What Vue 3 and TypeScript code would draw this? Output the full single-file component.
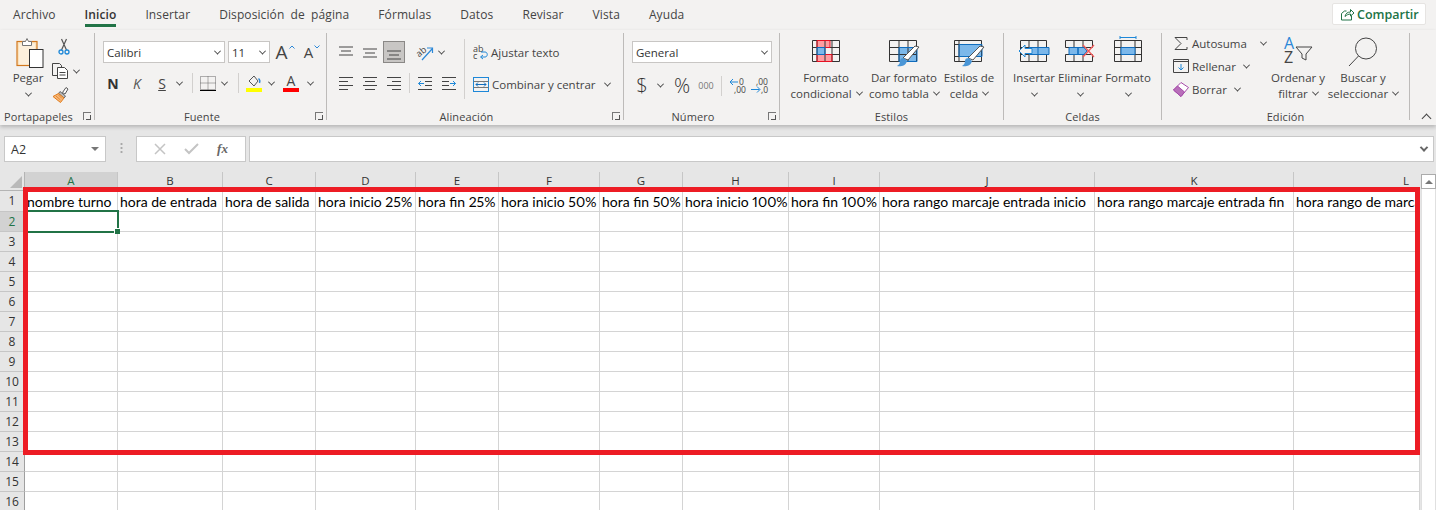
<script setup lang="ts">
const tabs = ['Archivo', 'Inicio', 'Insertar', 'Disposición de página', 'Fórmulas', 'Datos', 'Revisar', 'Vista', 'Ayuda'];

// anchos medidos en la captura
const columns = [
  { name: 'A', width: 93, title: 'nombre turno' },
  { name: 'B', width: 105, title: 'hora de entrada' },
  { name: 'C', width: 93, title: 'hora de salida' },
  { name: 'D', width: 100, title: 'hora inicio 25%' },
  { name: 'E', width: 83, title: 'hora fin 25%' },
  { name: 'F', width: 101, title: 'hora inicio 50%' },
  { name: 'G', width: 83, title: 'hora fin 50%' },
  { name: 'H', width: 106, title: 'hora inicio 100%' },
  { name: 'I', width: 91, title: 'hora fin 100%' },
  { name: 'J', width: 215, title: 'hora rango marcaje entrada inicio' },
  { name: 'K', width: 199, title: 'hora rango marcaje entrada fin' },
  { name: 'L', width: 126, title: 'hora rango de marcaje salida inicio' },
];
const rows = Array.from({ length: 16 }, (_, i) => i + 1);
const gridTemplate = '25px ' + columns.map((c) => c.width + 'px').join(' ');
</script>

<template>
  <div class="app">
    <div class="tabs">
      <div v-for="tab in tabs" :key="tab" class="tab" :class="{ active: tab === 'Inicio' }">{{ tab }}</div>
      <button class="share">
        <svg width="15" height="14" viewBox="0 0 15 14" fill="none" stroke="#217346">
          <path d="M1.5 6.500v6.500h10V8.500M1.500 6.500l3-2.500h2M5 9.500c.5-3 2.500-4.500 5.500-4.500V2.500l3.500 3.500-3.500 3V7c-2 0-4 1-5.500 2.500z" />
        </svg>
        Compartir
      </button>
    </div>

    <div class="ribbon">
      <!-- Portapapeles -->
      <section class="group g-clip">
        <div class="body clip-body">
          <div class="big">
            <div class="big-icon paste-icon">
              <svg width="28" height="31" viewBox="0 0 28 31">
                <rect x="1" y="4.500" width="20" height="24" fill="#fbe3bd" stroke="#d2781e" stroke-width="1.200" />
                <path d="M3 6.500h16v21H3z" fill="#fdf0dc" />
                <path d="M6.500 8.500V4.500h3l1.500-3 1.500 3h3v4z" fill="#fff" stroke="#777" />
                <rect x="13.500" y="12.500" width="13.500" height="18" fill="#fff" stroke="#333" />
              </svg>
            </div>
            <span>Pegar</span>
            <i class="chev"></i>
          </div>
          <div class="clip-tools">
            <svg width="12" height="17" viewBox="0 0 12 17" fill="none">
              <path d="M3.500 1l5 11M8.500 1l-5 11" stroke="#555" stroke-width="1.200" />
              <circle cx="3" cy="14" r="2" stroke="#1e88d8" stroke-width="1.300" />
              <circle cx="9" cy="14" r="2" stroke="#1e88d8" stroke-width="1.300" />
            </svg>
            <div class="clip-copy">
              <svg width="17" height="16" viewBox="0 0 17 16" fill="#f3f2f1" stroke="#444">
                <path d="M.5.500h7l2 2v10h-9z" />
                <path d="M5.500 4.500h7l3 3v8h-10z" fill="#fff" />
                <path d="M7.500 9.500h6M7.500 12h6" />
              </svg>
              <i class="chev"></i>
            </div>
            <svg width="17" height="16" viewBox="0 0 17 16" fill="none">
              <path d="M10.500 5.500l3.500-5 2 1.500-3 5z" fill="#fff" stroke="#555" />
              <path d="M8 4.500l5.500 4.500-1.500 2L6.500 6.500z" fill="#bbb" stroke="#666" />
              <path d="M6.500 6.500L12 11l-3.500 4.500L1 9.500z" fill="#f7b87a" stroke="#e07b1a" />
              <path d="M4 9l4.500 4M6 7.500l4 4" stroke="#e07b1a" stroke-width=".8" />
            </svg>
          </div>
        </div>
        <div class="foot"><span>Portapapeles</span><i class="launch"></i></div>
      </section>
      <div class="sep"></div>

      <!-- Fuente -->
      <section class="group g-font">
        <div class="body font-body">
          <div class="font-row1">
            <div class="select font-name">Calibri<i class="chev"></i></div>
            <div class="select font-size">11<i class="chev"></i></div>
            <span class="grow">A<svg width="6" height="4" viewBox="0 0 6 4" fill="none" stroke="#2b88d8"><path d="M.5 3.500L3 1l2.500 2.500" /></svg></span>
            <span class="shrink">A<svg width="6" height="4" viewBox="0 0 6 4" fill="none" stroke="#2b88d8"><path d="M.5.500L3 3 5.500.500" /></svg></span>
          </div>
          <div class="font-row2">
            <b class="t-n">N</b>
            <em class="t-k">K</em>
            <u class="t-s">S</u>
            <i class="chev"></i>
            <i class="vsep"></i>
            <svg width="16" height="15" viewBox="0 0 16 15" fill="none" stroke="#666" stroke-dasharray="1 1">
              <path d="M.5.500h15v13H.5zM8 .500v13M.5 7h15" />
              <path d="M0 14.500h16" stroke="#000" stroke-dasharray="none" />
            </svg>
            <i class="chev"></i>
            <i class="vsep"></i>
            <svg width="16" height="17" viewBox="0 0 16 17" fill="none">
              <path d="M3 6l5-5 4 5-4 5z" stroke="#555" />
              <path d="M12.500 3.500c1.500 1 1.500 3 1 4.500" stroke="#2b88d8" stroke-width="1.400" />
              <rect y="13" width="16" height="4" fill="#ffff00" />
            </svg>
            <i class="chev"></i>
            <span class="font-color">A</span>
            <i class="chev"></i>
          </div>
        </div>
        <div class="foot"><span>Fuente</span><i class="launch"></i></div>
      </section>
      <div class="sep"></div>

      <!-- Alineacion -->
      <section class="group g-align">
        <div class="body align-body">
          <div class="align-left">
            <div class="align-row1">
              <svg class="ico14" viewBox="0 0 14 12" stroke="#444"><path d="M0 .500h14M2 4.500h10M0 8.500h14" /></svg>
              <svg class="ico14" viewBox="0 0 14 12" stroke="#444"><path d="M0 2.500h14M2 6.500h10M0 10.500h14" /></svg>
              <div class="align-on">
                <svg class="ico14" viewBox="0 0 14 12" stroke="#444"><path d="M0 3.500h14M2 7.500h10M0 11.500h14" /></svg>
              </div>
              <span></span>
              <svg class="with-text" width="18" height="17" viewBox="0 0 18 17" fill="none">
                <text x="0" y="11" transform="rotate(-40 5 8)" class="svg-small">ab</text>
                <path d="M6 16L16 5M11 4h5.500v5" stroke="#2b88d8" stroke-width="1.200" />
              </svg>
              <i class="chev"></i>
            </div>
            <div class="align-row2">
              <svg class="ico14" viewBox="0 0 14 13" stroke="#444"><path d="M0 .500h14M0 4.500h9M0 8.500h14M0 12.500h9" /></svg>
              <svg class="ico14" viewBox="0 0 14 13" stroke="#444"><path d="M0 .500h14M2 4.500h10M0 8.500h14M2 12.500h10" /></svg>
              <svg class="ico14" viewBox="0 0 14 13" stroke="#444"><path d="M0 .500h14M5 4.500h9M0 8.500h14M5 12.500h9" /></svg>
              <i class="vsep"></i>
              <svg class="ico14" viewBox="0 0 14 13" fill="none" stroke="#444"><path d="M0 .500h14M7 4.500h7M7 8.500h7M0 12.500h14" /><path d="M6 6.500H.5M3 4L.5 6.500 3 9" stroke="#1e88d8" /></svg>
              <svg class="ico14" viewBox="0 0 14 13" fill="none" stroke="#444"><path d="M0 .500h14M0 4.500h7M0 8.500h7M0 12.500h14" /><path d="M8 6.500h5.500M11 4l2.500 2.500L11 9" stroke="#1e88d8" /></svg>
            </div>
          </div>
          <i class="vsep tall"></i>
          <div class="align-right">
            <div class="line">
              <svg class="with-text" width="15" height="16" viewBox="0 0 15 16" fill="none">
                <text x="0" y="7.500" class="svg-small">ab</text>
                <text x="0" y="15" class="svg-small">c</text>
                <path d="M8 13h4c3 0 3-5 0-5H8M10 11l-2.500 2 2.500 2" stroke="#1e88d8" />
              </svg>
              <span>Ajustar texto</span>
            </div>
            <div class="line">
              <svg width="16" height="15" viewBox="0 0 16 15" fill="none" stroke="#1e88d8">
                <rect x=".5" y=".500" width="15" height="14" />
                <path d="M.5 4.500h15M.5 10.500h15" stroke="#777" />
                <path d="M3 7.500h10M5 5.500l-2 2 2 2M11 5.500l2 2-2 2" stroke="#0f6cbd" />
              </svg>
              <span>Combinar y centrar</span>
              <i class="chev merge-chev"></i>
            </div>
          </div>
        </div>
        <div class="foot"><span>Alineación</span><i class="launch"></i></div>
      </section>
      <div class="sep"></div>

      <!-- Numero -->
      <section class="group g-num">
        <div class="body num-body">
          <div class="select num-format">General<i class="chev"></i></div>
          <div class="num-row">
            <span class="t-money">$</span>
            <i class="chev"></i>
            <span class="t-pct">%</span>
            <span class="t-thou">000</span>
            <i class="vsep"></i>
            <svg class="with-text" width="17" height="17" viewBox="0 0 17 17" fill="none">
              <text x="10" y="7.500" class="svg-num">0</text>
              <text x="5" y="16" class="svg-num">,00</text>
              <path d="M9 5H1.500M4 2L1 5l3 3" stroke="#1e88d8" />
            </svg>
            <svg class="with-text" width="17" height="17" viewBox="0 0 17 17" fill="none">
              <text x="5" y="7.500" class="svg-num">,00</text>
              <text x="10" y="16" class="svg-num">,0</text>
              <path d="M0 12.500h8.500M6 9.500l3 3-3 3" stroke="#1e88d8" />
            </svg>
          </div>
        </div>
        <div class="foot"><span>Número</span><i class="launch"></i></div>
      </section>
      <div class="sep"></div>

      <!-- Estilos -->
      <section class="group g-styles">
        <div class="body styles-body">
          <div class="big">
            <div class="big-icon">
              <svg width="28" height="22" viewBox="0 0 28 22" fill="none">
                <path d="M5 .500h13v7H5zM5 14.500h15v7H5z" fill="#ff9da1" />
                <path d="M5 7.500h8v7H5z" fill="#7cb8ea" />
                <path d="M.5.500h27v21H.5zM.5 7.500h27M.5 14.500h27M5 .500v21M13 .500v21M20 .500v21" stroke="#333" />
                <path d="M5 .500h13v7H5zM5 14.500h15v7H5z" stroke="#e81123" />
                <path d="M5 7.500h8v7H5z" stroke="#0f6cbd" />
              </svg>
            </div>
            <span>Formato</span>
            <span>condicional<i class="chev inline"></i></span>
          </div>
          <div class="big">
            <div class="big-icon">
              <svg width="31" height="27" viewBox="0 0 31 27" fill="none">
                <path d="M10 7.500h18v14H10z" fill="#7cb8ea" />
                <path d="M.5.500h27v21H.5zM.5 7.500h27M.5 14.500h27M10 .500v21M19 .500v21" stroke="#333" />
                <path d="M10 7.500h18v14H10z" stroke="#0f6cbd" />
                <path d="M14 18L26 6l4 1-11 13z" fill="#fff" stroke="#555" />
                <path d="M8 26c3 1 9 0 10-5l-3-3c-3 0-4 1-4 3 0 2-1 4-3 5z" fill="#4a96d6" />
              </svg>
            </div>
            <span>Dar formato</span>
            <span>como tabla<i class="chev inline"></i></span>
          </div>
          <div class="big">
            <div class="big-icon">
              <svg width="31" height="27" viewBox="0 0 31 27" fill="none">
                <path d="M5 4.500h23v12H5z" fill="#7cb8ea" />
                <path d="M.5.500h27v21H.5zM.5 4.500h27M.5 16.500h27M5 .500v21" stroke="#333" />
                <path d="M5 4.500h23v12H5z" stroke="#0f6cbd" />
                <path d="M14 18L26 6l4 1-11 13z" fill="#fff" stroke="#555" />
                <path d="M8 26c3 1 9 0 10-5l-3-3c-3 0-4 1-4 3 0 2-1 4-3 5z" fill="#4a96d6" />
              </svg>
            </div>
            <span>Estilos de</span>
            <span>celda<i class="chev inline"></i></span>
          </div>
        </div>
        <div class="foot"><span>Estilos</span></div>
      </section>
      <div class="sep"></div>

      <!-- Celdas -->
      <section class="group g-cells">
        <div class="body cells-body">
          <div class="big">
            <div class="big-icon">
              <svg width="32" height="22" viewBox="0 0 32 22" fill="none">
                <path d="M2.500.500h26v21h-26zM2.500 7.500h26M2.500 14.500h26M11 .500v21M20 .500v21" stroke="#333" />
                <path d="M11 7.500h20v7H11z" fill="#7cb8ea" stroke="#0f6cbd" />
                <path d="M20 7.500v7" stroke="#0f6cbd" />
                <path d="M14 8.500H7V5l-6 6 6 6v-3.500h7z" fill="#f3f2f1" stroke="#1e88d8" />
              </svg>
            </div>
            <span>Insertar</span>
            <i class="chev"></i>
          </div>
          <div class="big">
            <div class="big-icon">
              <svg width="30" height="22" viewBox="0 0 30 22" fill="none">
                <path d="M.5.500h27v7h-27zM.5 14.500h27v7H.5zM9 .500v7M18 .500v7M9 14.500v7M18 14.500v7" stroke="#333" />
                <path d="M4 7.500h9v7H4zM13 7.500h6l3 3.500-3 3.500h-6z" fill="#7cb8ea" stroke="#0f6cbd" />
                <path d="M18 5l11 12M29 5L18 17" stroke="#f25a5a" stroke-width="1.300" />
              </svg>
            </div>
            <span>Eliminar</span>
            <i class="chev"></i>
          </div>
          <div class="big">
            <div class="big-icon format-icon">
              <svg width="28" height="26" viewBox="0 0 28 26" fill="none">
                <path d="M6 1.500h16M6 0v3M22 0v3" stroke="#1e88d8" />
                <path d="M.5 4.500h27v21H.5zM.5 11.500h27M.5 18.500h27M7 4.500v21M21 4.500v21" stroke="#333" />
                <path d="M7 11.500h14v7H7z" fill="#7cb8ea" stroke="#0f6cbd" />
              </svg>
            </div>
            <span>Formato</span>
            <i class="chev"></i>
          </div>
        </div>
        <div class="foot"><span>Celdas</span></div>
      </section>
      <div class="sep"></div>

      <!-- Edicion -->
      <section class="group g-edit">
        <div class="body edit-body">
          <div class="edit-list">
            <div class="line">
              <span class="edit-ico"><svg width="14" height="13" viewBox="0 0 14 13" fill="none" stroke="#444"><path d="M13 3V.500H1L7 6.500 1 12.500h12V10" /></svg></span>
              <span>Autosuma</span><i class="chev auto-chev"></i>
            </div>
            <div class="line">
              <span class="edit-ico"><svg width="16" height="14" viewBox="0 0 16 14" fill="none" stroke="#444"><path d="M.5.500h15v13H.5zM.5 2.500h15" /><path d="M8 5v6M5.500 8.500L8 11l2.500-2.500" stroke="#1e88d8" /></svg></span>
              <span>Rellenar</span><i class="chev inline"></i>
            </div>
            <div class="line">
              <span class="edit-ico"><svg width="16" height="15" viewBox="0 0 16 15" fill="none"><path d="M.5 8L8 .500l7.500 5L8 14.500z" fill="#fff" stroke="#a54aa8" /><path d="M.5 8L4.500 4l7 6L8 14.500z" fill="#b86fba" stroke="#a54aa8" /></svg></span>
              <span>Borrar</span><i class="chev inline"></i>
            </div>
          </div>
          <div class="big">
            <div class="big-icon">
              <svg class="with-text" width="29" height="27" viewBox="0 0 29 27" fill="none">
                <text x="0" y="12" class="svg-az blue">A</text>
                <text x="0" y="26" class="svg-az">Z</text>
                <path d="M12 10h16l-6 7v6l-4-2v-4z" stroke="#444" />
              </svg>
            </div>
            <span>Ordenar y</span>
            <span>filtrar<i class="chev inline"></i></span>
          </div>
          <div class="big">
            <div class="big-icon">
              <svg width="30" height="30" viewBox="0 0 30 30" fill="none" stroke="#444">
                <circle cx="18" cy="11.500" r="10.500" />
                <path d="M10.500 19L1 29" />
              </svg>
            </div>
            <span>Buscar y</span>
            <span>seleccionar<i class="chev inline"></i></span>
          </div>
        </div>
        <div class="foot"><span>Edición</span></div>
      </section>
      <div class="sep"></div>
      <i class="chev collapse"></i>
    </div>

    <div class="formula">
      <div class="namebox">A2<i class="tri"></i></div>
      <div class="dots"></div>
      <div class="fxbox">
        <svg width="12" height="12" viewBox="0 0 12 12" stroke="#c4c4c4" stroke-width="1.500"><path d="M1 1l10 10M11 1L1 11" /></svg>
        <svg width="15" height="12" viewBox="0 0 15 12" fill="none" stroke="#c4c4c4" stroke-width="2"><path d="M1 6l4 4 9-9" /></svg>
        <em>fx</em>
      </div>
      <div class="fxinput"><i class="chev"></i></div>
    </div>

    <div class="sheet-wrap">
      <div class="sheet" :style="{ gridTemplateColumns: gridTemplate }">
        <div class="corner"><i></i></div>
        <div
          v-for="col in columns"
          :key="col.name"
          class="col-head"
          :class="{ sel: col.name === 'A', cut: col.name === 'L' }"
        >
          {{ col.name }}
        </div>
        <template v-for="row in rows" :key="row">
          <div class="row-head" :class="{ sel: row === 2 }">{{ row }}</div>
          <div v-for="col in columns" :key="col.name" class="cell">{{ row === 1 ? col.title : '' }}</div>
        </template>
        <div class="selection"><i></i></div>
        <div class="highlight"></div>
      </div>
      <div class="scrollbar">
        <div class="scroll-up"><i></i></div>
      </div>
    </div>
  </div>
</template>

<style scoped>
.app {
  width: 1436px;
  height: 510px;
  overflow: hidden;
  display: flex;
  flex-direction: column;
  background: #e6e6e6;
  font-family: "Open Sans", "Noto Sans", sans-serif;
  font-size: 11.5px;
  color: #444;
}

.with-text {
  overflow: visible;
}

.tabs {
  height: 30px;
  flex: none;
  display: flex;
  align-items: flex-start;
  gap: 29px;
  padding-left: 13px;
  background: #f3f2f1;
  font-size: 12px;
}

.tab {
  height: 27px;
  line-height: 29px;
  letter-spacing: 0.1px;
  word-spacing: 3px;
  white-space: nowrap;
}

.tab.active {
  color: #333;
  font-weight: 600;
  border-bottom: 3px solid #217346;
  height: 24px;
}

.share {
  margin: 3px 10px 0 auto;
  width: 94px;
  height: 22px;
  display: flex;
  align-items: center;
  gap: 2px;
  padding: 0 0 0 7px;
  background: #fff;
  border: 1px solid #e6e4e2;
  border-radius: 2px;
  color: #217346;
  font-family: inherit;
  font-size: 12.5px;
  font-weight: 600;
}

.ribbon {
  height: 95px;
  flex: none;
  display: flex;
  padding-top: 3px;
  box-sizing: border-box;
  background: #f3f2f1;
  box-shadow: 0 2px 4px rgba(0, 0, 0, 0.22);
  position: relative;
  z-index: 1;
}

.sep {
  width: 1px;
  height: 87px;
  background: #bdbbb9;
  flex: none;
}

.group {
  display: flex;
  flex-direction: column;
  flex: none;
}

.g-clip { width: 94px; }
.g-font { width: 231px; }
.g-align { width: 296px; }
.g-num { width: 155px; }
.g-styles { width: 223px; }
.g-cells { width: 157px; }
.g-edit { width: 247px; }

.body {
  height: 75px;
  box-sizing: border-box;
}

.foot {
  height: 16px;
  display: flex;
  align-items: center;
  font-size: 11px;
  color: #444;
  letter-spacing: 0.1px;
}

.foot span {
  flex: 1;
  text-align: center;
}

.foot span:not(:last-child) {
  margin-right: 6px;
}

.launch {
  width: 8px;
  height: 8px;
  margin-right: 3px;
  border-left: 1px solid #777;
  border-top: 1px solid #777;
  box-sizing: border-box;
  position: relative;
}

.launch::after {
  content: "";
  position: absolute;
  right: 0;
  bottom: 0;
  width: 4px;
  height: 4px;
  border-right: 1px solid #555;
  border-bottom: 1px solid #555;
}

.chev {
  display: block;
  width: 4px;
  height: 4px;
  border-right: 1px solid #444;
  border-bottom: 1px solid #444;
  transform: rotate(45deg) translate(-1px, -1px);
  flex: none;
}

.chev.inline {
  display: inline-block;
  margin-left: 5px;
  vertical-align: 2px;
}

.big {
  display: flex;
  flex-direction: column;
  align-items: center;
  line-height: 16px;
  white-space: nowrap;
}

.big-icon {
  height: 33px;
  display: flex;
  align-items: flex-start;
  justify-content: center;
  flex: none;
}

.big > .chev {
  margin-top: 6px;
}

.paste-icon {
  margin-left: 4px;
}

/* Portapapeles */
.clip-body {
  display: flex;
  padding: 4px 0 0 8px;
}

.clip-body .big {
  width: 40px;
}

.clip-tools {
  margin-left: 4px;
  display: flex;
  flex-direction: column;
  gap: 8px;
  align-items: flex-start;
  padding-top: 1px;
}

.clip-tools > svg:first-child {
  margin-left: 6px;
}

.clip-copy {
  display: flex;
  align-items: center;
  gap: 5px;
}

/* Fuente */
.font-body {
  padding: 8px 0 0 8px;
  display: flex;
  flex-direction: column;
  gap: 9px;
}

.font-row1 {
  display: grid;
  grid-template-columns: 122px 42px 24px 24px;
  column-gap: 3px;
  height: 22px;
  align-items: center;
}

.select {
  height: 22px;
  box-sizing: border-box;
  background: #fff;
  border: 1px solid #c8c6c4;
  display: flex;
  align-items: center;
  justify-content: space-between;
  padding: 0 4px 0 3px;
  font-size: 11.5px;
  color: #333;
}

.grow,
.shrink {
  display: flex;
  align-items: flex-start;
  justify-content: center;
  color: #444;
  line-height: 22px;
}

.grow { font-size: 19px; }
.shrink { font-size: 15px; }

.grow svg,
.shrink svg {
  margin-top: 4px;
  margin-left: 1px;
}

.font-row2 {
  display: grid;
  grid-template-columns: 20px 28px 22px 12px 14px 18px 15px 12px 20px 14px 26px 12px;
  height: 22px;
  align-items: center;
  justify-items: center;
}

.t-n { font-size: 14px; color: #333; }
.t-k { font-size: 14px; font-weight: 400; color: #555; }
.t-s { font-size: 14px; color: #444; }

.vsep {
  display: block;
  width: 1px;
  height: 20px;
  background: #d2d0ce;
}

.vsep.tall {
  height: 60px;
  margin-top: -2px;
  flex: none;
}

.font-color {
  width: 16px;
  text-align: center;
  font-size: 14px;
  line-height: 14px;
  border-bottom: 4px solid #ff0000;
}

/* Alineacion */
.align-body {
  display: flex;
  padding: 8px 0 0 8px;
}

.align-left {
  width: 129px;
  display: flex;
  flex-direction: column;
  gap: 9px;
}

.align-row1,
.align-row2 {
  display: grid;
  height: 22px;
  align-items: center;
  justify-items: center;
}

.align-row1 { grid-template-columns: 22px 25px 24px 10px 18px 14px; }
.align-row2 { grid-template-columns: 22px 25px 24px 6px 26px 22px; }

.ico14 {
  width: 14px;
  height: 13px;
  display: block;
}

.align-on {
  width: 22px;
  height: 22px;
  background: #c8c6c4;
  border: 1px solid #8a8886;
  box-sizing: border-box;
  display: flex;
  align-items: flex-end;
  justify-content: center;
  padding-bottom: 2px;
}

.svg-small {
  font-family: "Open Sans", sans-serif;
  font-size: 9px;
  fill: #444;
  stroke: none;
}

.svg-num {
  font-family: "Open Sans", sans-serif;
  font-size: 8.5px;
  fill: #444;
  stroke: none;
}

.svg-az {
  font-family: "Open Sans", sans-serif;
  font-size: 16px;
  fill: #444;
  stroke: none;
}

.svg-az.blue {
  fill: #2b88d8;
}

.align-right {
  margin-left: 8px;
  display: flex;
  flex-direction: column;
  gap: 10px;
}

.line {
  display: flex;
  align-items: center;
  gap: 3px;
  height: 22px;
  white-space: nowrap;
}

.merge-chev {
  margin-left: 6px;
}

/* Numero */
.num-body {
  padding: 8px 0 0 8px;
  display: flex;
  flex-direction: column;
  gap: 9px;
}

.num-format {
  width: 140px;
}

.num-row {
  display: grid;
  grid-template-columns: 20px 16px 28px 20px 10px 22px 23px;
  height: 22px;
  align-items: center;
  justify-items: center;
}

.t-money { font-size: 20px; font-weight: 300; color: #333; }
.t-pct { font-size: 20px; font-weight: 300; color: #333; }
.t-thou { font-size: 9px; color: #777; }

/* Estilos */
.styles-body {
  display: grid;
  grid-template-columns: 72px 76px 46px;
  column-gap: 4px;
  padding: 7px 0 0 10px;
}

.styles-body .big-icon,
.cells-body .big-icon {
  height: 30px;
}

/* Celdas */
.cells-body {
  display: grid;
  grid-template-columns: 44px 48px 48px;
  padding: 7px 0 0 8px;
}

.cells-body .format-icon {
  margin-top: -4px;
  height: 34px;
}

/* Edicion */
.edit-body {
  display: grid;
  grid-template-columns: 95px 60px 70px;
  padding-left: 11px;
  padding-top: 4px;
}

.edit-list {
  display: flex;
  flex-direction: column;
  margin-top: -5px;
  gap: 1px;
}

.edit-ico {
  width: 16px;
  display: flex;
  justify-content: center;
}

.auto-chev {
  margin-left: 11px;
}

.collapse {
  align-self: flex-end;
  margin: 0 0 3px 13px;
  width: 6px;
  height: 6px;
  transform: rotate(225deg);
}

/* Barra de formulas */
.formula {
  height: 47px;
  flex: none;
  box-sizing: border-box;
  display: flex;
  padding-top: 11px;
  background: #e6e6e6;
}

.namebox,
.fxbox,
.fxinput {
  height: 26px;
  box-sizing: border-box;
  background: #fff;
  border: 1px solid #c8c8c8;
  display: flex;
  align-items: center;
}

.namebox {
  width: 102px;
  margin-left: 4px;
  padding: 0 6px 0 6px;
  justify-content: space-between;
  font-size: 12.5px;
  color: #333;
}

.tri {
  width: 0;
  height: 0;
  border-left: 4px solid transparent;
  border-right: 4px solid transparent;
  border-top: 4px solid #777;
}

.dots {
  width: 30px;
  background: radial-gradient(circle, #a8a8a8 1px, transparent 1.2px) center / 2px 4px repeat-y;
  background-size: 3px 4px;
  background-position: center 7px;
  height: 12px;
  margin-top: 7px;
}

.fxbox {
  width: 110px;
  justify-content: space-around;
  padding: 0 8px 0 8px;
}

.fxbox em {
  font-family: "Liberation Serif", serif;
  font-size: 13px;
  font-weight: 700;
  color: #666;
}

.fxinput {
  width: 1185px;
  margin-left: 3px;
  justify-content: flex-end;
  padding-right: 6px;
}

.fxinput .chev {
  border-color: #666;
  border-width: 0 2px 2px 0;
}

/* Hoja */
.sheet-wrap {
  flex: 1;
  display: flex;
  min-height: 0;
}

.sheet {
  position: relative;
  width: 1420px;
  display: grid;
  grid-auto-rows: 20px;
  grid-template-rows: 19px 21px;
  background: #fff;
  overflow: hidden;
  color: #000;
}

.corner {
  background: #e6e6e6;
  border-right: 1px solid #b4b4b4;
  border-bottom: 1px solid #b4b4b4;
  position: relative;
}

.corner i {
  position: absolute;
  right: 2px;
  bottom: 2px;
  width: 12px;
  height: 12px;
  background: #b9b9b9;
  clip-path: polygon(100% 0, 100% 100%, 0 100%);
}

.col-head {
  background: #e6e6e6;
  border-right: 1px solid #c6c6c6;
  border-bottom: 1px solid #9f9f9f;
  text-align: center;
  line-height: 18px;
  color: #333;
}

.col-head.cut {
  text-align: right;
  padding-right: 11px;
  border-right: 0;
}

.row-head {
  background: #e6e6e6;
  border-right: 1px solid #9f9f9f;
  border-bottom: 1px solid #c6c6c6;
  text-align: center;
  line-height: 20px;
  color: #333;
  font-size: 12px;
}

.col-head.sel,
.row-head.sel {
  background: #d2d2d2;
  color: #217346;
}

.cell {
  box-sizing: border-box;
  border-right: 1px solid #d4d4d4;
  border-bottom: 1px solid #d4d4d4;
  padding-left: 2px;
  font-family: "Lato", sans-serif;
  font-size: 14px;
  font-variant-numeric: proportional-nums;
  line-height: 21px;
  white-space: nowrap;
  overflow: hidden;
}

.selection {
  position: absolute;
  left: 24px;
  top: 38px;
  width: 95px;
  height: 23px;
  box-sizing: border-box;
  border: 2px solid #217346;
}

.selection i {
  position: absolute;
  right: -3px;
  bottom: -3px;
  width: 5px;
  height: 5px;
  background: #217346;
  border-left: 1px solid #fff;
  border-top: 1px solid #fff;
}

.highlight {
  position: absolute;
  left: 23px;
  top: 15px;
  width: 1397px;
  height: 268px;
  box-sizing: border-box;
  border: 5px solid #ed1c24;
}

.scrollbar {
  width: 16px;
  flex: none;
  padding-top: 2px;
  box-sizing: border-box;
  display: flex;
  flex-direction: column;
}

.scroll-up {
  height: 15px;
  flex: none;
  margin-left: 1px;
  background: #fff;
  border: 1px solid #ababab;
  box-sizing: border-box;
  display: flex;
  align-items: center;
  justify-content: center;
}

.scroll-up i {
  width: 0;
  height: 0;
  border-left: 4px solid transparent;
  border-right: 4px solid transparent;
  border-bottom: 4px solid #777;
}

.scrollbar::after {
  content: "";
  flex: 1;
  margin-left: 1px;
  background: #fff;
  border-left: 1px solid #e0e0e0;
  border-right: 1px solid #e0e0e0;
}
</style>

<style>
html, body { margin: 0; }
</style>
